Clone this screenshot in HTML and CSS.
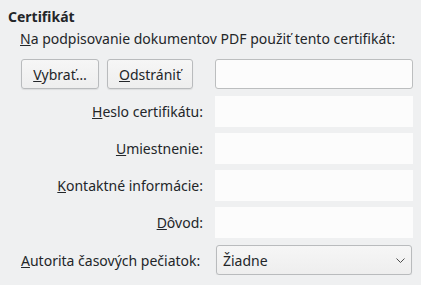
FILE: index.html
```html
<!DOCTYPE html>
<html lang="sk">
<head>
  <meta charset="UTF-8">
  <title>Certifikát</title>
  <link rel="stylesheet" href="styles.css">
</head>
<body>
<div class="panel">
  <h3 class="section-title">Certifikát</h3>
  <div class="section-body">
    <p class="intro"><u>N</u>a podpisovanie dokumentov PDF použiť tento certifikát:</p>

    <div class="form-grid">
      <div class="button-row">
        <button class="btn"><u>V</u>ybrať…</button>
        <button class="btn"><u>O</u>dstrániť</button>
      </div>
      <input class="field bordered" type="text">

      <label class="label"><span><u>H</u>eslo certifikátu:</span></label>
      <input class="field" type="password">

      <label class="label"><span><u>U</u>miestnenie:</span></label>
      <input class="field" type="text">

      <label class="label"><span><u>K</u>ontaktné informácie:</span></label>
      <input class="field" type="text">

      <label class="label"><span><u>D</u>ôvod:</span></label>
      <input class="field" type="text">

      <label class="label last"><span><u>A</u>utorita časových pečiatok:</span></label>
      <div class="select">
        <span>Žiadne</span>
        <svg class="chevron" width="9" height="5" viewBox="0 0 9 5">
          <path d="M0.5 0.5 L4.5 4.5 L8.5 0.5" fill="none" stroke="#4d4d4d" stroke-width="1"/>
        </svg>
      </div>
    </div>
  </div>
</div>
</body>
</html>
```

FILE: styles.css
```css
body {
  margin: 0;
  padding: 0;
  font-family: 'Noto Sans', sans-serif;
  font-size: 14px;
  color: #232629;
  background: #eff0f1;
}

.panel {
  padding: 8px 8px 0 8px;
}

.section-title {
  margin: 0;
  font-size: 14px;
  font-weight: bold;
  line-height: 18px;
}

.section-body {
  padding-left: 12px;
}

.intro {
  margin: 4px 0 11px 0;
  line-height: 18px;
}

.form-grid {
  display: grid;
  grid-template-columns: 183px 198px;
  column-gap: 12px;
  grid-auto-rows: 31px;
  row-gap: 6px;
}

.button-row {
  display: flex;
  gap: 8px;
  height: 30px;
  margin-left: 1px;
}

.btn {
  font-family: 'Noto Sans', sans-serif;
  font-size: 14px;
  color: #232629;
  height: 30px;
  padding: 0 10px;
  border: 1px solid #b9bbbd;
  border-radius: 3px;
  background: linear-gradient(#f6f6f6, #eeeeee);
  box-shadow: 0 1px 1px rgba(0,0,0,0.08);
  white-space: nowrap;
}

.btn:first-child {
  width: 78px;
}

.btn:nth-child(2) {
  width: 86px;
}

.field {
  box-sizing: border-box;
  width: 198px;
  height: 31px;
  margin: 0;
  border: none;
  background: #fcfcfc;
  outline: none;
}

.field.bordered {
  height: 30px;
  border: 1px solid #bcbebf;
  border-radius: 3px;
}

.label {
  display: flex;
  align-items: center;
  justify-content: flex-end;
  white-space: nowrap;
}

.label.last {
  justify-content: flex-start;
  margin-left: 1px;
  margin-top: 1px;
}

.select {
  box-sizing: border-box;
  height: 30px;
  margin: 1px 1px 0 1px;
  padding: 0 6px 0 6px;
  display: flex;
  align-items: center;
  justify-content: space-between;
  border: 1px solid #b9bbbd;
  border-radius: 3px;
  background: linear-gradient(#f6f6f6, #eeeeee);
  box-shadow: 0 1px 1px rgba(0,0,0,0.08);
}

.chevron {
  margin-right: 0;
}
```
